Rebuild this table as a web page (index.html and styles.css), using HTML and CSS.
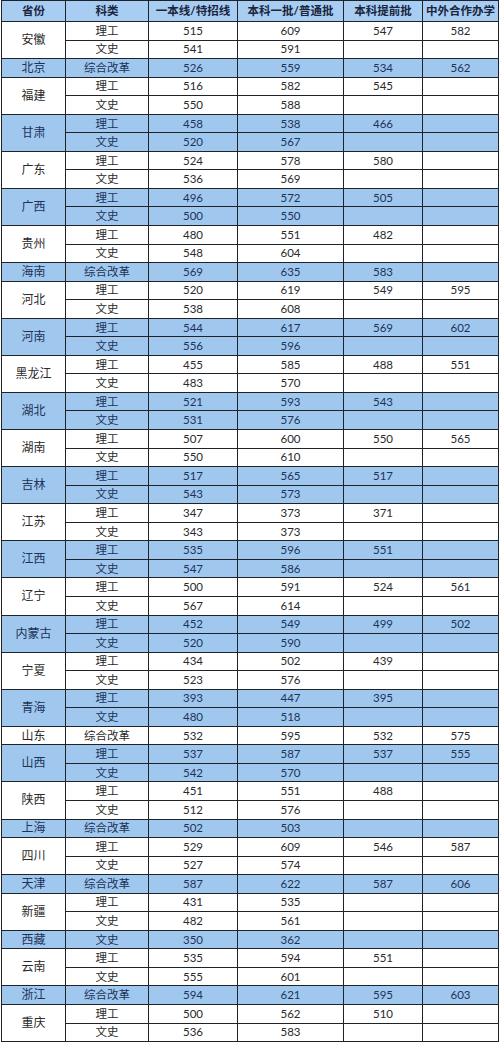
FILE: index.html
```html
<!DOCTYPE html>
<html lang="zh">
<head>
<meta charset="utf-8">
<link rel="stylesheet" href="styles.css">
</head>
<body>
<table class="grid">
<colgroup>
<col class="c1"><col class="c2"><col class="c3"><col class="c4"><col class="c5"><col class="c6">
</colgroup>
<thead>
<tr class="hd"><th>省份</th><th>科类</th><th>一本线/特招线</th><th>本科一批/普通批</th><th>本科提前批</th><th>中外合作办学</th></tr>
</thead>
<tbody>
<tr><td rowspan="2" class="prov">安徽</td><td>理工</td><td>515</td><td>609</td><td>547</td><td>582</td></tr>
<tr><td>文史</td><td>541</td><td>591</td><td></td><td></td></tr>
<tr class="b"><td class="prov">北京</td><td>综合改革</td><td>526</td><td>559</td><td>534</td><td>562</td></tr>
<tr><td rowspan="2" class="prov">福建</td><td>理工</td><td>516</td><td>582</td><td>545</td><td></td></tr>
<tr><td>文史</td><td>550</td><td>588</td><td></td><td></td></tr>
<tr class="b"><td rowspan="2" class="prov">甘肃</td><td>理工</td><td>458</td><td>538</td><td>466</td><td></td></tr>
<tr class="b"><td>文史</td><td>520</td><td>567</td><td></td><td></td></tr>
<tr><td rowspan="2" class="prov">广东</td><td>理工</td><td>524</td><td>578</td><td>580</td><td></td></tr>
<tr><td>文史</td><td>536</td><td>569</td><td></td><td></td></tr>
<tr class="b"><td rowspan="2" class="prov">广西</td><td>理工</td><td>496</td><td>572</td><td>505</td><td></td></tr>
<tr class="b"><td>文史</td><td>500</td><td>550</td><td></td><td></td></tr>
<tr><td rowspan="2" class="prov">贵州</td><td>理工</td><td>480</td><td>551</td><td>482</td><td></td></tr>
<tr><td>文史</td><td>548</td><td>604</td><td></td><td></td></tr>
<tr class="b"><td class="prov">海南</td><td>综合改革</td><td>569</td><td>635</td><td>583</td><td></td></tr>
<tr><td rowspan="2" class="prov">河北</td><td>理工</td><td>520</td><td>619</td><td>549</td><td>595</td></tr>
<tr><td>文史</td><td>538</td><td>608</td><td></td><td></td></tr>
<tr class="b"><td rowspan="2" class="prov">河南</td><td>理工</td><td>544</td><td>617</td><td>569</td><td>602</td></tr>
<tr class="b"><td>文史</td><td>556</td><td>596</td><td></td><td></td></tr>
<tr><td rowspan="2" class="prov">黑龙江</td><td>理工</td><td>455</td><td>585</td><td>488</td><td>551</td></tr>
<tr><td>文史</td><td>483</td><td>570</td><td></td><td></td></tr>
<tr class="b"><td rowspan="2" class="prov">湖北</td><td>理工</td><td>521</td><td>593</td><td>543</td><td></td></tr>
<tr class="b"><td>文史</td><td>531</td><td>576</td><td></td><td></td></tr>
<tr><td rowspan="2" class="prov">湖南</td><td>理工</td><td>507</td><td>600</td><td>550</td><td>565</td></tr>
<tr><td>文史</td><td>550</td><td>610</td><td></td><td></td></tr>
<tr class="b"><td rowspan="2" class="prov">吉林</td><td>理工</td><td>517</td><td>565</td><td>517</td><td></td></tr>
<tr class="b"><td>文史</td><td>543</td><td>573</td><td></td><td></td></tr>
<tr><td rowspan="2" class="prov">江苏</td><td>理工</td><td>347</td><td>373</td><td>371</td><td></td></tr>
<tr><td>文史</td><td>343</td><td>373</td><td></td><td></td></tr>
<tr class="b"><td rowspan="2" class="prov">江西</td><td>理工</td><td>535</td><td>596</td><td>551</td><td></td></tr>
<tr class="b"><td>文史</td><td>547</td><td>586</td><td></td><td></td></tr>
<tr><td rowspan="2" class="prov">辽宁</td><td>理工</td><td>500</td><td>591</td><td>524</td><td>561</td></tr>
<tr><td>文史</td><td>567</td><td>614</td><td></td><td></td></tr>
<tr class="b"><td rowspan="2" class="prov">内蒙古</td><td>理工</td><td>452</td><td>549</td><td>499</td><td>502</td></tr>
<tr class="b"><td>文史</td><td>520</td><td>590</td><td></td><td></td></tr>
<tr><td rowspan="2" class="prov">宁夏</td><td>理工</td><td>434</td><td>502</td><td>439</td><td></td></tr>
<tr><td>文史</td><td>523</td><td>576</td><td></td><td></td></tr>
<tr class="b"><td rowspan="2" class="prov">青海</td><td>理工</td><td>393</td><td>447</td><td>395</td><td></td></tr>
<tr class="b"><td>文史</td><td>480</td><td>518</td><td></td><td></td></tr>
<tr><td class="prov">山东</td><td>综合改革</td><td>532</td><td>595</td><td>532</td><td>575</td></tr>
<tr class="b"><td rowspan="2" class="prov">山西</td><td>理工</td><td>537</td><td>587</td><td>537</td><td>555</td></tr>
<tr class="b"><td>文史</td><td>542</td><td>570</td><td></td><td></td></tr>
<tr><td rowspan="2" class="prov">陕西</td><td>理工</td><td>451</td><td>551</td><td>488</td><td></td></tr>
<tr><td>文史</td><td>512</td><td>576</td><td></td><td></td></tr>
<tr class="b"><td class="prov">上海</td><td>综合改革</td><td>502</td><td>503</td><td></td><td></td></tr>
<tr><td rowspan="2" class="prov">四川</td><td>理工</td><td>529</td><td>609</td><td>546</td><td>587</td></tr>
<tr><td>文史</td><td>527</td><td>574</td><td></td><td></td></tr>
<tr class="b"><td class="prov">天津</td><td>综合改革</td><td>587</td><td>622</td><td>587</td><td>606</td></tr>
<tr><td rowspan="2" class="prov">新疆</td><td>理工</td><td>431</td><td>535</td><td></td><td></td></tr>
<tr><td>文史</td><td>482</td><td>561</td><td></td><td></td></tr>
<tr class="b"><td class="prov">西藏</td><td>文史</td><td>350</td><td>362</td><td></td><td></td></tr>
<tr><td rowspan="2" class="prov">云南</td><td>理工</td><td>535</td><td>594</td><td>551</td><td></td></tr>
<tr><td>文史</td><td>555</td><td>601</td><td></td><td></td></tr>
<tr class="b"><td class="prov">浙江</td><td>综合改革</td><td>594</td><td>621</td><td>595</td><td>603</td></tr>
<tr><td rowspan="2" class="prov">重庆</td><td>理工</td><td>500</td><td>562</td><td>510</td><td></td></tr>
<tr><td>文史</td><td>536</td><td>583</td><td></td><td></td></tr>
</tbody>
</table>
</body>
</html>
```
FILE: styles.css
```css
html, body {
  margin: 0;
  padding: 0;
  background: #ffffff;
}
body {
  padding: 0 0 0 1px;
  font-family: Lato, "Noto Sans CJK SC", sans-serif;
}
.grid {
  border-collapse: collapse;
  table-layout: fixed;
  width: 497px;
  font-size: 11.5px;
  color: #2a2a2a;
}
.c1 { width: 64px; }
.c2 { width: 83px; }
.c3 { width: 89px; }
.c4 { width: 106px; }
.c5 { width: 79px; }
.c6 { width: 76px; }
.grid th, .grid td {
  border: 1px solid #1f2328;
  text-align: center;
  vertical-align: middle;
  padding: 0;
  line-height: 14px;
  white-space: nowrap;
  overflow: hidden;
}
.hd {
  height: 21px;
  background: #a8cdf2;
}
.hd th {
  font-weight: 700;
  color: #1a2540;
  font-size: 11.5px;
}
tbody tr {
  height: 18.56px;
}
tr.b {
  background: #a0c8ef;
}
tr.b td {
  color: #1d3358;
}
.prov {
  font-size: 12px;
}
```
